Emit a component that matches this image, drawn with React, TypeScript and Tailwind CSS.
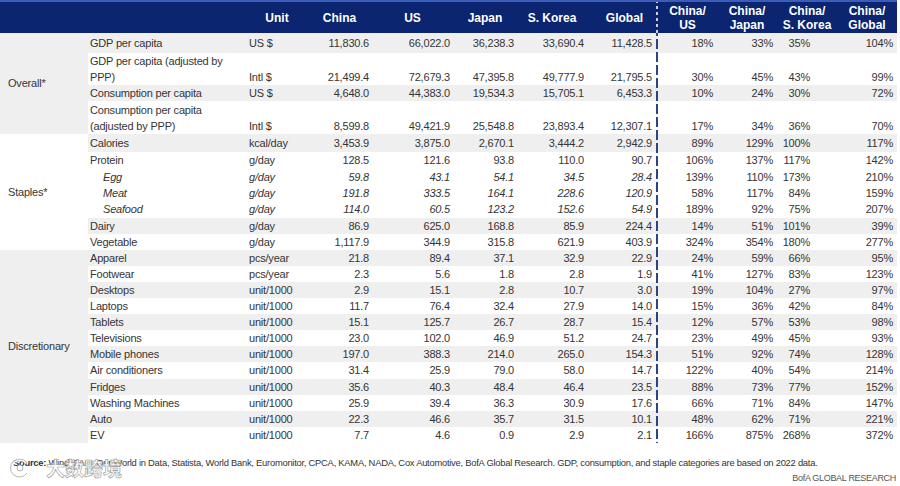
import React from "react";

type RowData = {
  label: React.ReactNode;
  unit: string;
  v: string[];
  p: string[];
  gray?: boolean;
  sub?: boolean;
  multi?: boolean;
  h: string;
};

const COLS = "grid-cols-[159px_60px_65px_81px_64px_70px_69px_2px_59px_60px_60px_60px]";
const VAL_PAD = ["pr-[3px]", "pr-[3px]", "pr-[3px]", "pr-[3px]", "pr-[4px]"];
const PCT_PAD = ["pr-[4px]", "pr-[4px]", "pr-[27px]", "pr-[4px]"];

const overall: RowData[] = [
  { label: "GDP per capita", unit: "US $", v: ["11,830.6", "66,022.0", "36,238.3", "33,690.4", "11,428.5"], p: ["18%", "33%", "35%", "104%"], gray: true, h: "h-[20px]" },
  { label: <>GDP per capita (adjusted by<br />PPP)</>, unit: "Intl $", v: ["21,499.4", "72,679.3", "47,395.8", "49,777.9", "21,795.5"], p: ["30%", "45%", "43%", "99%"], multi: true, h: "h-[32px]" },
  { label: "Consumption per capita", unit: "US $", v: ["4,648.0", "44,383.0", "19,534.3", "15,705.1", "6,453.3"], p: ["10%", "24%", "30%", "72%"], gray: true, h: "h-[16px]" },
  { label: <>Consumption per capita<br />(adjusted by PPP)</>, unit: "Intl $", v: ["8,599.8", "49,421.9", "25,548.8", "23,893.4", "12,307.1"], p: ["17%", "34%", "36%", "70%"], multi: true, h: "h-[33px]" },
];

const staples: RowData[] = [
  { label: "Calories", unit: "kcal/day", v: ["3,453.9", "3,875.0", "2,670.1", "3,444.2", "2,942.9"], p: ["89%", "129%", "100%", "117%"], gray: true, h: "h-[18px]" },
  { label: "Protein", unit: "g/day", v: ["128.5", "121.6", "93.8", "110.0", "90.7"], p: ["106%", "137%", "117%", "142%"], h: "h-[16.4px]" },
  { label: "Egg", unit: "g/day", v: ["59.8", "43.1", "54.1", "34.5", "28.4"], p: ["139%", "110%", "173%", "210%"], sub: true, h: "h-[16.4px]" },
  { label: "Meat", unit: "g/day", v: ["191.8", "333.5", "164.1", "228.6", "120.9"], p: ["58%", "117%", "84%", "159%"], sub: true, h: "h-[16.4px]" },
  { label: "Seafood", unit: "g/day", v: ["114.0", "60.5", "123.2", "152.6", "54.9"], p: ["189%", "92%", "75%", "207%"], sub: true, h: "h-[16.4px]" },
  { label: "Dairy", unit: "g/day", v: ["86.9", "625.0", "168.8", "85.9", "224.4"], p: ["14%", "51%", "101%", "39%"], gray: true, h: "h-[16.1px]" },
  { label: "Vegetable", unit: "g/day", v: ["1,117.9", "344.9", "315.8", "621.9", "403.9"], p: ["324%", "354%", "180%", "277%"], h: "h-[16.1px]" },
];

const disc: RowData[] = [
  { label: "Apparel", unit: "pcs/year", v: ["21.8", "89.4", "37.1", "32.9", "22.9"], p: ["24%", "59%", "66%", "95%"], gray: true, h: "h-[16.1px]" },
  { label: "Footwear", unit: "pcs/year", v: ["2.3", "5.6", "1.8", "2.8", "1.9"], p: ["41%", "127%", "83%", "123%"], h: "h-[16.1px]" },
  { label: "Desktops", unit: "unit/1000", v: ["2.9", "15.1", "2.8", "10.7", "3.0"], p: ["19%", "104%", "27%", "97%"], gray: true, h: "h-[16.1px]" },
  { label: "Laptops", unit: "unit/1000", v: ["11.7", "76.4", "32.4", "27.9", "14.0"], p: ["15%", "36%", "42%", "84%"], h: "h-[16.1px]" },
  { label: "Tablets", unit: "unit/1000", v: ["15.1", "125.7", "26.7", "28.7", "15.4"], p: ["12%", "57%", "53%", "98%"], gray: true, h: "h-[16.1px]" },
  { label: "Televisions", unit: "unit/1000", v: ["23.0", "102.0", "46.9", "51.2", "24.7"], p: ["23%", "49%", "45%", "93%"], h: "h-[16.1px]" },
  { label: "Mobile phones", unit: "unit/1000", v: ["197.0", "388.3", "214.0", "265.0", "154.3"], p: ["51%", "92%", "74%", "128%"], gray: true, h: "h-[16.1px]" },
  { label: "Air conditioners", unit: "unit/1000", v: ["31.4", "25.9", "79.0", "58.0", "14.7"], p: ["122%", "40%", "54%", "214%"], h: "h-[16.1px]" },
  { label: "Fridges", unit: "unit/1000", v: ["35.6", "40.3", "48.4", "46.4", "23.5"], p: ["88%", "73%", "77%", "152%"], gray: true, h: "h-[16.1px]" },
  { label: "Washing Machines", unit: "unit/1000", v: ["25.9", "39.4", "36.3", "30.9", "17.6"], p: ["66%", "71%", "84%", "147%"], h: "h-[16.1px]" },
  { label: "Auto", unit: "unit/1000", v: ["22.3", "46.6", "35.7", "31.5", "10.1"], p: ["48%", "62%", "71%", "221%"], gray: true, h: "h-[16.1px]" },
  { label: "EV", unit: "unit/1000", v: ["7.7", "4.6", "0.9", "2.9", "2.1"], p: ["166%", "875%", "268%", "372%"], h: "h-[16.1px]" },
];

function DashLine() {
  return <div className="self-stretch w-[2px] bg-fixed bg-[repeating-linear-gradient(to_bottom,#2c4386_0px,#2c4386_10px,transparent_10px,transparent_13px)]" />;
}

function Row({ r }: { r: RowData }) {
  const it = r.sub ? "italic" : "";
  return (
    <div className={`grid ${COLS} ${r.h} ${r.gray ? "bg-[#efefef]" : ""} ${r.multi ? "items-end" : "items-center"} leading-[16px]`}>
      <div className={`${r.sub ? "pl-[15px] italic" : "pl-[2px]"} whitespace-nowrap`}>{r.label}</div>
      <div className={`pl-[2px] ${it}`}>{r.unit}</div>
      {r.v.map((x, i) => (
        <div key={i} className={`text-right ${VAL_PAD[i]} ${it}`}>{x}</div>
      ))}
      <DashLine />
      {r.p.map((x, i) => (
        <div key={i} className={`text-right ${PCT_PAD[i]}`}>{x}</div>
      ))}
    </div>
  );
}

function Group({ name, rows, gray }: { name: string; rows: RowData[]; gray?: boolean }) {
  return (
    <div className="flex">
      <div className={`w-[88px] shrink-0 flex items-center pl-[8px] ${gray ? "bg-[#efefef]" : ""}`}>{name}</div>
      <div className="flex flex-col">
        {rows.map((r, i) => <Row key={i} r={r} />)}
      </div>
    </div>
  );
}

export default function App() {
  const heads = ["China", "US", "Japan", "S. Korea", "Global"];
  const ratio = [["China/", "US"], ["China/", "Japan"], ["China/", "S. Korea"], ["China/", "Global"]];
  return (
    <div className="w-[900px] h-[486px] bg-white overflow-hidden relative font-['Liberation_Sans',Arial,sans-serif] text-[11px] tracking-[-0.2px] text-[#353535]">
      <div className="h-[2px] w-[897px] bg-[#3b5cb8]" />
      <div className="w-[897px] h-[31px] bg-[#0b2570] text-white font-bold text-[12px] tracking-normal flex">
        <div className="w-[88px]" />
        <div className={`grid ${COLS} items-center`}>
          <div />
          <div className="text-center">Unit</div>
          {heads.map((h, i) => (
            <div key={h} className={`text-center ${i === 4 ? "pl-[6px]" : ""}`}>{h}</div>
          ))}
          <div className="self-stretch w-[2px] bg-fixed bg-[repeating-linear-gradient(to_bottom,#c9d1e8_0px,#c9d1e8_3px,transparent_3px,transparent_6px)]" />
          {ratio.map(([a, b]) => (
            <div key={b} className="text-center leading-[14px]">{a}<br />{b}</div>
          ))}
        </div>
      </div>
      <div className="w-[897px]">
        <Group name="Overall*" rows={overall} gray />
        <Group name="Staples*" rows={staples} />
        <Group name="Discretionary" rows={disc} gray />
      </div>
      <div className="mt-[13px] pl-[13px] text-[9.4px] tracking-[-0.25px] text-[#333] whitespace-nowrap">
        <span className="font-bold">Source:</span> Wind, FAO, Our World in Data, Statista, World Bank, Euromonitor, CPCA, KAMA, NADA, Cox Automotive, BofA Global Research. GDP, consumption, and staple categories are based on 2022 data.
      </div>
      <div className="w-[896px] text-right mt-[2px] text-[9px] tracking-[-0.3px] text-[#555]">BofA GLOBAL RESEARCH</div>
      <div className="absolute left-[8px] top-[454px] flex items-center gap-[14px] opacity-90 pointer-events-none">
        <svg width="24" height="24" viewBox="0 0 24 24">
          <path d="M19 7 A9 9 0 1 0 19 17" fill="none" stroke="#ffffff" strokeWidth="4" />
          <path d="M19 7 A9 9 0 1 0 19 17" fill="none" stroke="#9a9a9a" strokeWidth="0.8" />
          <circle cx="12" cy="12" r="3" fill="#ffffff" stroke="#9a9a9a" strokeWidth="0.8" />
        </svg>
        <span className="font-['Noto_Sans_CJK_SC',sans-serif] font-bold text-[19px] tracking-[0px] text-white [-webkit-text-stroke:0.7px_#9a9a9a]">大数跨境</span>
      </div>
    </div>
  );
}
